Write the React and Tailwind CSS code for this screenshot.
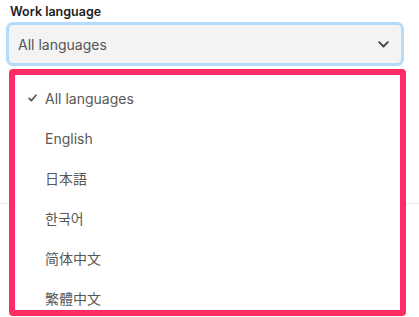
import React from "react";

const items = ["All languages", "English", "日本語", "한국어", "简体中文", "繁體中文"];

export default function App() {
  return (
    <div
      className="relative w-[419px] h-[317px] overflow-hidden bg-white"
      style={{ fontFamily: 'Inter, "Noto Sans CJK JP", "Noto Sans CJK KR", "Noto Sans CJK SC", sans-serif' }}
    >
      <div className="pl-[10px] pt-[4px] text-[12.5px] leading-[16px] font-semibold text-[#1c1c1c]">Work language</div>
      <div className="ml-[6px] mt-[2px] w-[398px] h-[44px] rounded-[7px] border-[3px] border-[#b5dbfa] bg-[#f3f3f3] flex items-center justify-between pl-[9px] pr-[12px]">
        <span className="text-[14px] text-[#555] mt-[1px]">All languages</span>
        <svg width="11" height="7" viewBox="0 0 11 7" fill="none">
          <path d="M1.2 1.2 L5.5 5.5 L9.8 1.2" stroke="#444" strokeWidth="1.8" strokeLinecap="round" strokeLinejoin="round" />
        </svg>
      </div>
      <div className="mt-[137px] h-px bg-[#e6e6e6]" />
      <div className="absolute left-[9px] top-[69px] w-[397px] h-[247px] border-[6px] border-[#ff2d63] rounded-[4px] bg-white pt-[3px]">
        {items.map((t, i) => (
          <div key={t} className="h-[40px] flex items-center text-[14px] text-[#585858]">
            <span className="w-[29px] flex justify-end pr-[7px]">
              {i === 0 && (
                <svg width="9" height="8" viewBox="0 0 9 8" fill="none">
                  <path d="M1 4.3 L3.4 6.6 L8 1.2" stroke="#555" strokeWidth="1.7" strokeLinecap="round" strokeLinejoin="round" />
                </svg>
              )}
            </span>
            <span className="ml-[1px]">{t}</span>
          </div>
        ))}
      </div>
    </div>
  );
}
